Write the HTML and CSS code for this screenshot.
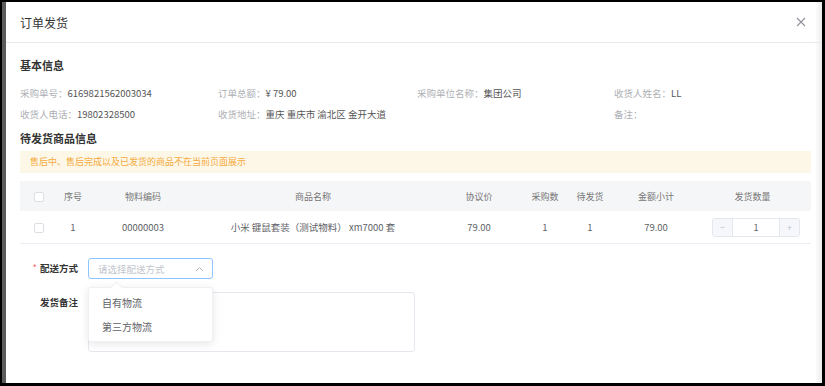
FILE: index.html
```html
<!DOCTYPE html>
<html lang="zh">
<head>
  <meta charset="UTF-8">
  <meta name="viewport" content="width=device-width, initial-scale=1.0">
  <title>订单发货</title>
  <link rel="stylesheet" href="styles.css">
</head>
<body>
  <div class="frame">
    <div class="dialog-header">
      <span class="dialog-title">订单发货</span>
      <svg class="close" width="10" height="10" viewBox="0 0 10 10">
        <path d="M1 1L9 9M9 1L1 9" stroke="#909399" stroke-width="1.1" fill="none"/>
      </svg>
    </div>

    <div class="dialog-body">
      <h3 class="section-title">基本信息</h3>
      <div class="info-grid">
        <div><span class="lbl">采购单号：</span><span class="val">6169821562003034</span></div>
        <div><span class="lbl">订单总额：</span><span class="val">¥ 79.00</span></div>
        <div><span class="lbl">采购单位名称：</span><span class="val">集团公司</span></div>
        <div><span class="lbl">收货人姓名：</span><span class="val">LL</span></div>
        <div><span class="lbl">收货人电话：</span><span class="val">19802328500</span></div>
        <div><span class="lbl">收货地址：</span><span class="val">重庆 重庆市 渝北区 金开大道</span></div>
        <div></div>
        <div><span class="lbl">备注：</span></div>
      </div>

      <h3 class="section-title second">待发货商品信息</h3>
      <div class="alert">售后中、售后完成以及已发货的商品不在当前页面展示</div>

      <div class="table">
        <div class="tr th">
          <div><span class="checkbox"></span></div>
          <div>序号</div>
          <div>物料编码</div>
          <div>商品名称</div>
          <div>协议价</div>
          <div>采购数</div>
          <div>待发货</div>
          <div>金额小计</div>
          <div>发货数量</div>
        </div>
        <div class="tr td">
          <div><span class="checkbox"></span></div>
          <div>1</div>
          <div>00000003</div>
          <div>小米 键鼠套装（测试物料） xm7000 套</div>
          <div>79.00</div>
          <div>1</div>
          <div>1</div>
          <div>79.00</div>
          <div>
            <div class="stepper">
              <span class="step-btn minus">−</span>
              <span class="step-val">1</span>
              <span class="step-btn plus">+</span>
            </div>
          </div>
        </div>
      </div>

      <div class="form">
        <div class="form-row">
          <label class="form-label"><span class="req">*</span>配送方式</label>
          <div class="select-wrap">
            <div class="select">
              <span class="placeholder">请选择配送方式</span>
              <svg width="9" height="6" viewBox="0 0 9 6">
                <path d="M1 5L4.5 1.5L8 5" stroke="#b0b3b8" stroke-width="1" fill="none"/>
              </svg>
            </div>
            <div class="dropdown">
              <div class="option">自有物流</div>
              <div class="option">第三方物流</div>
            </div>
          </div>
        </div>
        <div class="form-row">
          <label class="form-label">发货备注</label>
          <div class="textarea"></div>
        </div>
      </div>
    </div>
  </div>
</body>
</html>
```

FILE: styles.css
```css
* {
  box-sizing: border-box;
  margin: 0;
  padding: 0;
}
html, body {
  background-color: #000;
}
body {
  font-family: "Noto Sans CJK SC", "Noto Sans", sans-serif;
  color: #555;
  width: 825px;
  height: 386px;
  overflow: hidden;
}
.frame {
  margin: 2px 3px 3px 2px;
  height: 381px;
  border-left: 4px solid #5c5c5c;
  background: linear-gradient(to left, #ececec 0, #fff 7px);
}
.dialog-header {
  height: 41px;
  display: flex;
  align-items: center;
  justify-content: space-between;
  padding: 0 16px 0 14px;
  border-bottom: 1px solid #ebebeb;
}
.dialog-title {
  font-size: 12px;
  color: #333;
}
.dialog-body {
  padding: 14px 11px 0 14px;
}
.section-title {
  font-size: 11px;
  font-weight: bold;
  color: #333;
  line-height: 16px;
}
.section-title.second {
  margin-top: 5px;
}
.info-grid {
  margin-top: 10px;
  display: grid;
  grid-template-columns: 198px 199px 197px 1fr;
  font-size: 9.5px;
  line-height: 21px;
}
.lbl {
  color: #aeb0b5;
}
.val {
  color: #555;
}
.alert {
  margin-top: 5px;
  height: 22px;
  line-height: 22px;
  padding-left: 10px;
  background-color: #fdf7e7;
  color: #f5ab40;
  font-size: 9px;
}
.table {
  margin-top: 8px;
  font-size: 9px;
}
.tr {
  display: grid;
  grid-template-columns: 36px 34px 106px 234px 98px 34px 56px 76px 117px;
  align-items: center;
  text-align: center;
}
.th {
  height: 30px;
  background-color: #f5f6f8;
  color: #777;
}
.td {
  height: 33px;
  border-bottom: 1px solid #ebeef5;
  color: #606266;
  font-size: 9.5px;
}
.checkbox {
  display: inline-block;
  width: 10px;
  height: 10px;
  border: 1px solid #dcdfe6;
  border-radius: 2px;
  background: #fff;
  vertical-align: middle;
  margin-left: 2px;
}
.stepper {
  display: flex;
  width: 88px;
  height: 19px;
  margin-left: 18px;
  border: 1px solid #e4e7ed;
  border-radius: 3px;
  overflow: hidden;
  font-size: 9px;
}
.step-btn {
  width: 20px;
  background-color: #f5f7fa;
  color: #c0c4cc;
  line-height: 17px;
}
.minus {
  border-right: 1px solid #e4e7ed;
}
.plus {
  border-left: 1px solid #e4e7ed;
}
.step-val {
  flex: 1;
  line-height: 17px;
  color: #606266;
}
.form {
  margin-top: 14px;
  display: flex;
  flex-direction: column;
  gap: 13px;
}
.form-row {
  display: flex;
  align-items: flex-start;
}
.form-label {
  width: 58px;
  margin-right: 10px;
  text-align: right;
  font-size: 9.5px;
  font-weight: bold;
  color: #333;
  line-height: 21px;
}
.req {
  color: #f56c6c;
  margin-right: 3px;
  font-weight: normal;
}
.select-wrap {
  position: relative;
}
.select {
  width: 125px;
  height: 21px;
  border: 1px solid #8cc5ff;
  border-radius: 3px;
  display: flex;
  align-items: center;
  justify-content: space-between;
  padding: 0 8px 0 9px;
  font-size: 9.5px;
}
.placeholder {
  color: #c0c4cc;
}
.dropdown {
  position: absolute;
  top: 29px;
  left: 0;
  width: 125px;
  height: 55px;
  padding-top: 3px;
  background: #fff;
  border: 1px solid #eef0f3;
  border-radius: 3px;
  box-shadow: 0 2px 8px rgba(0, 0, 0, 0.1);
  z-index: 2;
}
.dropdown::before {
  content: '';
  position: absolute;
  top: -5px;
  left: 23px;
  width: 8px;
  height: 8px;
  background: #fff;
  border-left: 1px solid #eef0f3;
  border-top: 1px solid #eef0f3;
  transform: rotate(45deg);
}
.option {
  height: 24px;
  line-height: 24px;
  padding-left: 13px;
  font-size: 10px;
  color: #606266;
}
.textarea {
  width: 327px;
  height: 60px;
  border: 1px solid #e4e7ed;
  border-radius: 3px;
}
```
